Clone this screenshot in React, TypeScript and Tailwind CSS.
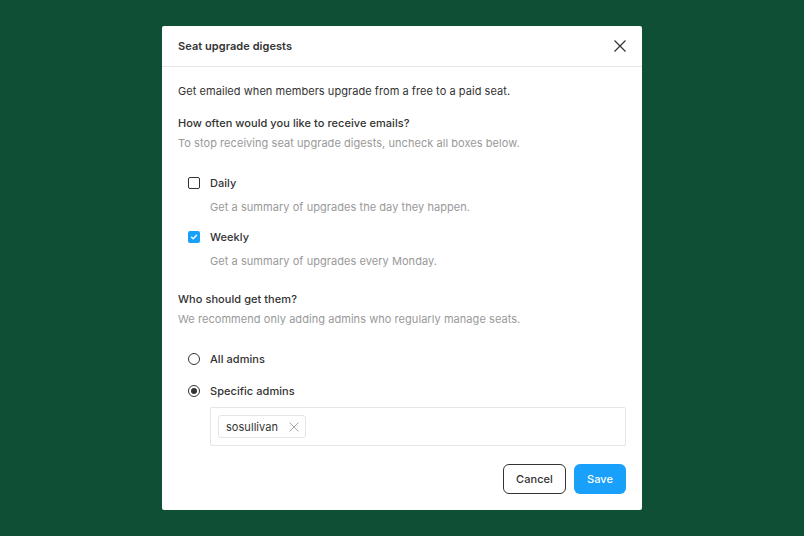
import React, { useState } from 'react';

const Checkbox: React.FC<{ checked: boolean; onChange: () => void }> = ({ checked, onChange }) => (
  <button
    type="button"
    onClick={onChange}
    className={`w-3 h-3 shrink-0 rounded-[2px] flex items-center justify-center ${
      checked ? 'bg-[#18a0fb]' : 'border border-[#333333] bg-white'
    }`}
  >
    {checked && (
      <svg width="8" height="8" viewBox="0 0 8 8" fill="none">
        <path d="M1.5 4.2 L3.2 5.8 L6.5 2.2" stroke="white" strokeWidth="1.3" strokeLinecap="round" strokeLinejoin="round" />
      </svg>
    )}
  </button>
);

const Radio: React.FC<{ checked: boolean; onChange: () => void }> = ({ checked, onChange }) => (
  <button
    type="button"
    onClick={onChange}
    className="w-3 h-3 shrink-0 rounded-full border border-[#333333] bg-white flex items-center justify-center"
  >
    {checked && <span className="w-[6px] h-[6px] rounded-full bg-[#333333]" />}
  </button>
);

export default function App() {
  const [daily, setDaily] = useState(false);
  const [weekly, setWeekly] = useState(true);
  const [who, setWho] = useState<'all' | 'specific'>('specific');

  return (
    <div
      className="w-[804px] h-[536px] bg-[#0e4f36] flex justify-center pt-[26px]"
      style={{ fontFamily: 'Inter, "Noto Sans", sans-serif' }}
    >
      <div className="w-[480px] h-[484px] bg-white rounded-[2px] flex flex-col text-[11px] tracking-[0.005em] text-[#333333]">
        {/* Header */}
        <div className="h-[41px] flex items-center justify-between pl-4 pr-[14px] border-b border-[#e5e5e5]">
          <span className="font-semibold leading-4">Seat upgrade digests</span>
          <button type="button" className="w-4 h-4 flex items-center justify-center">
            <svg width="12" height="12" viewBox="0 0 12 12" fill="none">
              <path d="M0.5 0.5 L11.5 11.5 M11.5 0.5 L0.5 11.5" stroke="#333333" strokeWidth="1.2" />
            </svg>
          </button>
        </div>

        {/* Body */}
        <div className="flex flex-col px-4 pt-4 pb-4">
          <p className="leading-4">Get emailed when members upgrade from a free to a paid seat.</p>

          <p className="leading-4 font-medium mt-4">How often would you like to receive emails?</p>
          <p className="leading-4 text-[#999999] mt-1">To stop receiving seat upgrade digests, uncheck all boxes below.</p>

          <div className="flex items-center gap-[10px] h-6 mt-5 pl-[10px]">
            <Checkbox checked={daily} onChange={() => setDaily(!daily)} />
            <span className="font-medium leading-4">Daily</span>
          </div>
          <p className="leading-4 text-[#999999] mt-1 pl-8">Get a summary of upgrades the day they happen.</p>

          <div className="flex items-center gap-[10px] h-6 mt-[10px] pl-[10px]">
            <Checkbox checked={weekly} onChange={() => setWeekly(!weekly)} />
            <span className="font-medium leading-4">Weekly</span>
          </div>
          <p className="leading-4 text-[#999999] mt-1 pl-8">Get a summary of upgrades every Monday.</p>

          <p className="leading-4 font-medium mt-[22px]">Who should get them?</p>
          <p className="leading-4 text-[#999999] mt-1">We recommend only adding admins who regularly manage seats.</p>

          <div className="flex items-center gap-[10px] h-6 mt-5 pl-[10px]">
            <Radio checked={who === 'all'} onChange={() => setWho('all')} />
            <span className="font-medium leading-4">All admins</span>
          </div>
          <div className="flex items-center gap-[10px] h-6 mt-2 pl-[10px]">
            <Radio checked={who === 'specific'} onChange={() => setWho('specific')} />
            <span className="font-medium leading-4">Specific admins</span>
          </div>

          <div className="ml-8 mt-1 h-[39px] border border-[#e5e5e5] rounded-[2px] flex items-center px-[7px]">
            <div className="h-[23px] flex items-center gap-[11px] pl-[7px] pr-[6px] border border-[#e5e5e5] rounded-[3px]">
              <span className="leading-4">sosullivan</span>
              <svg width="10" height="10" viewBox="0 0 10 10" fill="none">
                <path d="M0.5 0.5 L9.5 9.5 M9.5 0.5 L0.5 9.5" stroke="#a8a8a8" strokeWidth="1" />
              </svg>
            </div>
          </div>

          <div className="flex justify-end gap-2 mt-[18px]">
            <button
              type="button"
              className="h-[30px] w-[63px] rounded-[6px] border border-[#333333] font-medium text-[#333333] leading-4"
            >
              Cancel
            </button>
            <button
              type="button"
              className="h-[30px] w-[52px] rounded-[6px] bg-[#18a0fb] font-medium text-white leading-4"
            >
              Save
            </button>
          </div>
        </div>
      </div>
    </div>
  );
}
